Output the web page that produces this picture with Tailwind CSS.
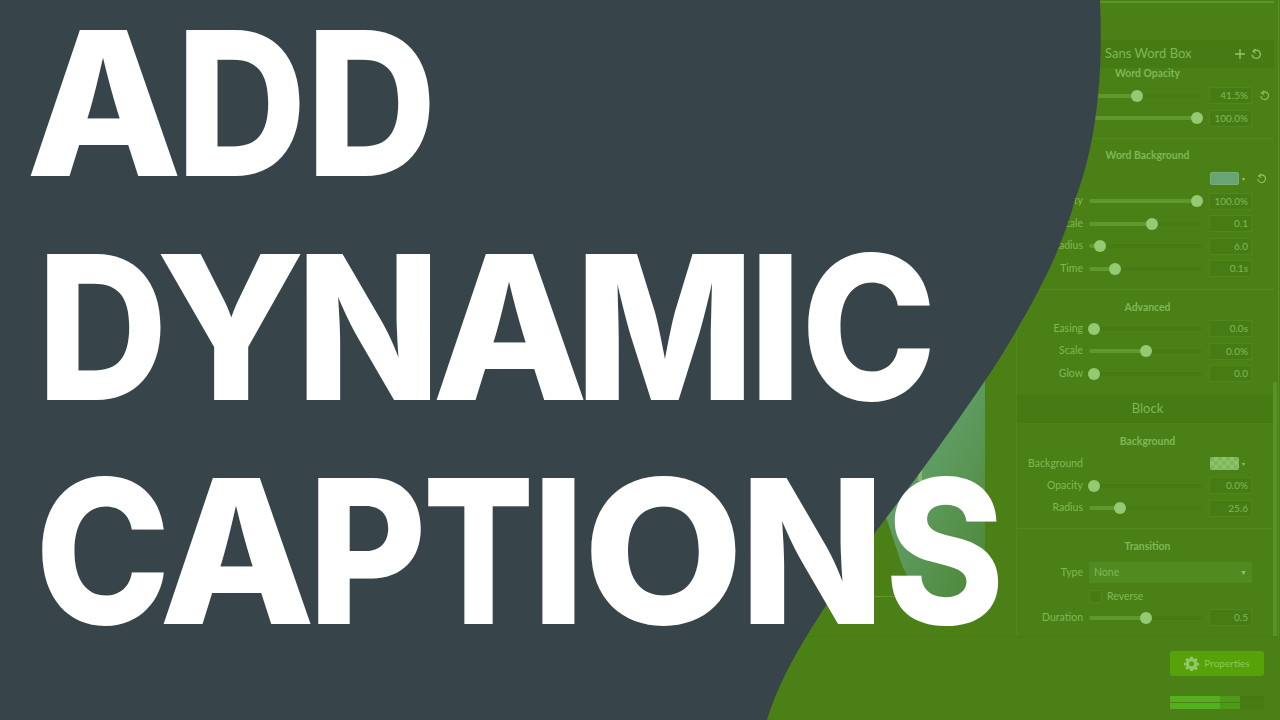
<!DOCTYPE html>
<html><head><meta charset="utf-8"><title>Add Dynamic Captions</title>
<script src="https://cdn.jsdelivr.net/npm/@tailwindcss/browser@4"></script></head>
<body class="m-0">
<div class="relative w-[1280px] h-[720px] overflow-hidden bg-[#4b8016] font-['Lato','Liberation_Sans',sans-serif]">
  <div class="flex flex-col h-full">
  <div class="flex h-[637px] border-b border-[#467a12]">
    <div class="w-[1016px] shrink-0 relative">
      <div class="absolute left-[860px] top-[370px] w-[125px] h-[240px] bg-gradient-to-br from-[#78b05e] via-[#5e9b60] to-[#4c8530] [clip-path:polygon(100%_0,100%_96%,48%_96%,34%_82%,22%_63%,0_42%)]"></div>
      <div class="absolute left-[875px] top-[596px] w-[25px] h-px bg-[#5f9a2a]"></div>
      <div class="absolute left-[918px] top-[470px] w-[4px] h-[11px] bg-[#86b96b]"></div>
    </div>
    <div class="w-[264px] shrink-0 border-l border-[#4f8719] relative pr-[6px]">
        <div class="absolute right-[3px] top-[382px] w-[4px] h-[254px] bg-[#5a9227]"></div>
        <div class="absolute right-[1px] top-0 w-px h-[637px] bg-[#568e22]"></div>
        <div class="h-[3px] border-b-2 border-[#5a9527]"></div>
        <div class="h-[37px]"></div>
        <div class="h-[28px] bg-[#467a12] flex items-center pl-[88px] pr-[12px] text-[13px] text-[#7db957]">
          <span class="flex-1">Sans Word Box</span>
          <svg class="w-[12px] h-[12px] mr-[4px]" viewBox="0 0 12 12" fill="none" stroke="#8fc46b" stroke-width="1.4"><path d="M6 1v10M1 6h10"/></svg>
          <svg class="w-[12px] h-[12px]" viewBox="0 0 12 12" fill="none" stroke="#8fc46b" stroke-width="1.2"><path d="M3 3.5a4.2 4.2 0 1 1-1 3"/><path d="M5.500 1L3 3.500 5.500 5" /></svg>
        </div>
        <div class="h-[12px] flex items-center justify-center pl-[4px] text-[10.4px] font-bold text-[#7db957] whitespace-nowrap">Word Opacity</div>
        <div class="h-[7px]"></div>

        <div class="flex flex-col gap-[5.5px] pb-[11px] border-b border-[#528a1e]">
          <div class="flex items-center h-[17px]"><span class="w-[66px] text-right text-[10.5px] text-[#7db957]">Opacity</span><div class="relative w-[113px] h-[4px] ml-[6px] bg-[#477c14] rounded-full"><div class="h-full w-[48px] bg-[#5f982c] rounded-full"></div><div class="absolute left-[42px] -top-[4px] w-[12px] h-[12px] rounded-full bg-[#94ca71]"></div></div><div class="ml-[7px] w-[43px] h-[17px] bg-[#477c14] border border-[#4f8719] text-right pr-[3px] text-[10px] leading-[15px] text-[#7db957]">41.5%</div><svg class="ml-[7px] w-[11px] h-[11px]" viewBox="0 0 12 12" fill="none" stroke="#8fc46b" stroke-width="1.2"><path d="M3 3.5a4.2 4.2 0 1 1-1 3"/><path d="M5.5 1L3 3.5 5.5 5"/></svg></div>
          <div class="flex items-center h-[17px]"><span class="w-[66px] text-right text-[10.5px] text-[#7db957]">Fade</span><div class="relative w-[113px] h-[4px] ml-[6px] bg-[#477c14] rounded-full"><div class="h-full w-[108px] bg-[#5f982c] rounded-full"></div><div class="absolute left-[102px] -top-[4px] w-[12px] h-[12px] rounded-full bg-[#94ca71]"></div></div><div class="ml-[7px] w-[43px] h-[17px] bg-[#477c14] border border-[#4f8719] text-right pr-[3px] text-[10px] leading-[15px] text-[#7db957]">100.0%</div></div>
        </div>

        <div class="h-[35px] flex items-center justify-center pl-[4px] text-[10.4px] font-bold text-[#7db957]">Word Background</div>
        <div class="flex items-center h-[17px] -mt-[4px]"><div class="ml-[193px] w-[29px] h-[13px] bg-[#69a474] rounded-[2px] border border-[#76ad7c]"></div><span class="ml-[3px] text-[6px] text-[#8fc46b]">▾</span><svg class="ml-[11px] w-[11px] h-[11px]" viewBox="0 0 12 12" fill="none" stroke="#8fc46b" stroke-width="1.2"><path d="M3 3.5a4.2 4.2 0 1 1-1 3"/><path d="M5.5 1L3 3.5 5.5 5"/></svg></div>
        <div class="flex flex-col gap-[5.5px] pt-[6px] pb-[12px] border-b border-[#528a1e]">
          <div class="flex items-center h-[17px]"><span class="w-[66px] text-right text-[10.5px] text-[#7db957]">Opacity</span><div class="relative w-[113px] h-[4px] ml-[6px] bg-[#477c14] rounded-full"><div class="h-full w-[108px] bg-[#5f982c] rounded-full"></div><div class="absolute left-[102px] -top-[4px] w-[12px] h-[12px] rounded-full bg-[#94ca71]"></div></div><div class="ml-[7px] w-[43px] h-[17px] bg-[#477c14] border border-[#4f8719] text-right pr-[3px] text-[10px] leading-[15px] text-[#7db957]">100.0%</div></div>
          <div class="flex items-center h-[17px]"><span class="w-[66px] text-right text-[10.5px] text-[#7db957]">Scale</span><div class="relative w-[113px] h-[4px] ml-[6px] bg-[#477c14] rounded-full"><div class="h-full w-[62px] bg-[#5f982c] rounded-full"></div><div class="absolute left-[57px] -top-[4px] w-[12px] h-[12px] rounded-full bg-[#94ca71]"></div></div><div class="ml-[7px] w-[43px] h-[17px] bg-[#477c14] border border-[#4f8719] text-right pr-[3px] text-[10px] leading-[15px] text-[#7db957]">0.1</div></div>
          <div class="flex items-center h-[17px]"><span class="w-[66px] text-right text-[10.5px] text-[#7db957]">Radius</span><div class="relative w-[113px] h-[4px] ml-[6px] bg-[#477c14] rounded-full"><div class="h-full w-[10px] bg-[#5f982c] rounded-full"></div><div class="absolute left-[5px] -top-[4px] w-[12px] h-[12px] rounded-full bg-[#94ca71]"></div></div><div class="ml-[7px] w-[43px] h-[17px] bg-[#477c14] border border-[#4f8719] text-right pr-[3px] text-[10px] leading-[15px] text-[#7db957]">6.0</div></div>
          <div class="flex items-center h-[17px]"><span class="w-[66px] text-right text-[10.5px] text-[#7db957]">Time</span><div class="relative w-[113px] h-[4px] ml-[6px] bg-[#477c14] rounded-full"><div class="h-full w-[25px] bg-[#5f982c] rounded-full"></div><div class="absolute left-[20px] -top-[4px] w-[12px] h-[12px] rounded-full bg-[#94ca71]"></div></div><div class="ml-[7px] w-[43px] h-[17px] bg-[#477c14] border border-[#4f8719] text-right pr-[3px] text-[10px] leading-[15px] text-[#7db957]">0.1s</div></div>
        </div>

        <div class="h-[35px] flex items-center justify-center pl-[4px] text-[10.4px] font-bold text-[#7db957]">Advanced</div>
        <div class="flex flex-col gap-[5.5px] -mt-[5px] pb-[13px]">
          <div class="flex items-center h-[17px]"><span class="w-[66px] text-right text-[10.5px] text-[#7db957]">Easing</span><div class="relative w-[113px] h-[4px] ml-[6px] bg-[#477c14] rounded-full"><div class="absolute -left-[1px] -top-[4px] w-[12px] h-[12px] rounded-full bg-[#94ca71]"></div></div><div class="ml-[7px] w-[43px] h-[17px] bg-[#477c14] border border-[#4f8719] text-right pr-[3px] text-[10px] leading-[15px] text-[#7db957]">0.0s</div></div>
          <div class="flex items-center h-[17px]"><span class="w-[66px] text-right text-[10.5px] text-[#7db957]">Scale</span><div class="relative w-[113px] h-[4px] ml-[6px] bg-[#477c14] rounded-full"><div class="h-full w-[56px] bg-[#5f982c] rounded-full"></div><div class="absolute left-[51px] -top-[4px] w-[12px] h-[12px] rounded-full bg-[#94ca71]"></div></div><div class="ml-[7px] w-[43px] h-[17px] bg-[#477c14] border border-[#4f8719] text-right pr-[3px] text-[10px] leading-[15px] text-[#7db957]">0.0%</div></div>
          <div class="flex items-center h-[17px]"><span class="w-[66px] text-right text-[10.5px] text-[#7db957]">Glow</span><div class="relative w-[113px] h-[4px] ml-[6px] bg-[#477c14] rounded-full"><div class="absolute -left-[1px] -top-[4px] w-[12px] h-[12px] rounded-full bg-[#94ca71]"></div></div><div class="ml-[7px] w-[43px] h-[17px] bg-[#477c14] border border-[#4f8719] text-right pr-[3px] text-[10px] leading-[15px] text-[#7db957]">0.0</div></div>
        </div>

        <div class="h-[28px] bg-[#467a12] flex items-center justify-center pl-[4px] text-[13px] text-[#7db957]">Block</div>
        <div class="h-[38px] flex items-center justify-center pl-[4px] text-[10.4px] font-bold text-[#7db957]">Background</div>
        <div class="flex items-center h-[17px] -mt-[6px]"><span class="w-[66px] text-right text-[10.5px] text-[#7db957]">Background</span><div class="ml-[127px] w-[29px] h-[13px] rounded-[2px] bg-[#8ec26a] bg-[repeating-conic-gradient(#8ec26a_0_25%,#7fb75b_0_50%)] bg-[length:8px_8px]"></div><span class="ml-[3px] text-[6px] text-[#8fc46b]">▾</span></div>
        <div class="flex flex-col gap-[5.5px] pt-[5px] pb-[11px] border-b border-[#528a1e]">
          <div class="flex items-center h-[17px]"><span class="w-[66px] text-right text-[10.5px] text-[#7db957]">Opacity</span><div class="relative w-[113px] h-[4px] ml-[6px] bg-[#477c14] rounded-full"><div class="absolute -left-[1px] -top-[4px] w-[12px] h-[12px] rounded-full bg-[#94ca71]"></div></div><div class="ml-[7px] w-[43px] h-[17px] bg-[#477c14] border border-[#4f8719] text-right pr-[3px] text-[10px] leading-[15px] text-[#7db957]">0.0%</div></div>
          <div class="flex items-center h-[17px]"><span class="w-[66px] text-right text-[10.5px] text-[#7db957]">Radius</span><div class="relative w-[113px] h-[4px] ml-[6px] bg-[#477c14] rounded-full"><div class="h-full w-[30px] bg-[#5f982c] rounded-full"></div><div class="absolute left-[25px] -top-[4px] w-[12px] h-[12px] rounded-full bg-[#94ca71]"></div></div><div class="ml-[7px] w-[43px] h-[17px] bg-[#477c14] border border-[#4f8719] text-right pr-[3px] text-[10px] leading-[15px] text-[#7db957]">25.6</div></div>
        </div>

        <div class="h-[37px] flex items-center justify-center pl-[4px] text-[10.4px] font-bold text-[#7db957]">Transition</div>
        <div class="flex items-center h-[22px] -mt-[4px]"><span class="w-[66px] text-right text-[10.5px] text-[#7db957]">Type</span><div class="ml-[6px] w-[163px] h-[21px] bg-[#518a20] flex items-center justify-between px-[5px] text-[10.5px] text-[#7db957]"><span>None</span><span class="text-[7px] text-[#8fc46b]">▼</span></div></div>
        <div class="flex items-center h-[14px] mt-[6px] ml-[72px]"><div class="w-[13px] h-[13px] bg-[#477c14] border border-[#4f8719]"></div><span class="ml-[5px] text-[10.5px] text-[#7db957]">Reverse</span></div>
        <div class="flex items-center h-[17px] mt-[5.5px]"><span class="w-[66px] text-right text-[10.5px] text-[#7db957]">Duration</span><div class="relative w-[113px] h-[4px] ml-[6px] bg-[#477c14] rounded-full"><div class="h-full w-[56px] bg-[#5f982c] rounded-full"></div><div class="absolute left-[51px] -top-[4px] w-[12px] h-[12px] rounded-full bg-[#94ca71]"></div></div><div class="ml-[7px] w-[43px] h-[17px] bg-[#477c14] border border-[#4f8719] text-right pr-[3px] text-[10px] leading-[15px] text-[#7db957]">0.5</div></div>
    </div>
  </div>
  <div class="h-[53px] border-b border-[#477c14] flex items-center justify-end pr-[16px]">
        <div class="w-[94px] h-[25px] bg-[#57a208] rounded-[3px] flex items-center justify-center gap-[5px] text-[10px] text-[#8cc85e]">
          <svg class="w-[15px] h-[15px]" viewBox="0 0 24 24" fill="#8fc86a"><path fill-rule="evenodd" d="M10 1h4l.6 3.100 1.900.8L19.100 3l2.900 2.900-1.900 2.600.8 1.900L24 11v4l-3.100.6-.8 1.900 1.900 2.600-2.900 2.900-2.600-1.900-1.900.8L14 24h-4l-.6-3.100-1.900-.8L4.900 22 2 19.100l1.900-2.600-.8-1.900L0 15v-4l3.100-.6.8-1.900L2 5.900 4.900 3l2.600 1.900 1.900-.8zM12 8.500a4 4 0 1 0 0 8 4 4 0 0 0 0-8z"/></svg>
          Properties
        </div>
  </div>
  <div class="flex-1 pt-[6px] flex justify-end pr-[16px]">
        <div class="w-[94px] flex flex-col gap-px">
          <div class="h-[6px] flex"><div class="w-[50px] bg-[#55b01f]"></div><div class="w-[20px] bg-[#4d9a1a]"></div><div class="w-[24px] bg-[#467a12]"></div></div>
          <div class="h-[6px] flex"><div class="w-[50px] bg-[#55b01f]"></div><div class="w-[20px] bg-[#4d9a1a]"></div><div class="w-[24px] bg-[#467a12]"></div></div>
        </div>
  </div>
  </div>

  <svg class="absolute inset-0" width="1280" height="720" viewBox="0 0 1280 720"><path fill="#37454b" d="M0 0H1100C1103 70 1098 140 1075 200C1060 255 1035 300 1000 358C960 420 900 500 877 530C830 600 785 660 767 720H0Z"/></svg>

  <div class="absolute left-0 top-0 w-[1280px] flex flex-col text-white font-['Inter','Liberation_Sans',sans-serif] font-extrabold text-[201px] leading-[206px]">
    <div class="flex h-[224px] pl-[26px]">
      <span class="block shrink-0 h-[206px] w-[150px] origin-left scale-x-[1.01]">A</span>
      <span class="block shrink-0 h-[206px] w-[130px] origin-left scale-x-[0.9]">D</span>
      <span class="block shrink-0 h-[206px] origin-left scale-x-[0.9]">D</span>
    </div>
    <div class="flex h-[224px] pl-[37px]">
      <span class="block shrink-0 h-[206px] w-[119px] origin-left scale-x-[0.9]">D</span>
      <span class="block shrink-0 h-[206px] w-[140px] origin-left scale-x-[0.986]">Y</span>
      <span class="block shrink-0 h-[206px] w-[136px] origin-left scale-x-[0.94]">N</span>
      <span class="block shrink-0 h-[206px] w-[142.5px] origin-left scale-x-[1.01]">A</span>
      <span class="block shrink-0 h-[206px] w-[174.5px] origin-left scale-x-[0.947]">M</span>
      <span class="block shrink-0 h-[206px] w-[51.6px] origin-left scale-x-[0.92]">I</span>
      <span class="block shrink-0 h-[206px] origin-left scale-x-[0.907]">C</span>
    </div>
    <div class="flex h-[224px] pl-[34.6px]">
      <span class="block shrink-0 h-[206px] w-[124.4px] origin-left scale-x-[0.907]">C</span>
      <span class="block shrink-0 h-[206px] w-[149px] origin-left scale-x-[1.01]">A</span>
      <span class="block shrink-0 h-[206px] w-[115px] origin-left scale-x-[0.905]">P</span>
      <span class="block shrink-0 h-[206px] w-[109px] origin-left scale-x-[0.816]">T</span>
      <span class="block shrink-0 h-[206px] w-[51px] origin-left scale-x-[0.92]">I</span>
      <span class="block shrink-0 h-[206px] w-[157px] origin-left scale-x-[1.035]">O</span>
      <span class="block shrink-0 h-[206px] w-[144.6px] origin-left scale-x-[0.94]">N</span>
      <span class="block shrink-0 h-[206px] origin-left scale-x-[0.9]">S</span>
    </div>
  </div>
</div>
</body></html>
